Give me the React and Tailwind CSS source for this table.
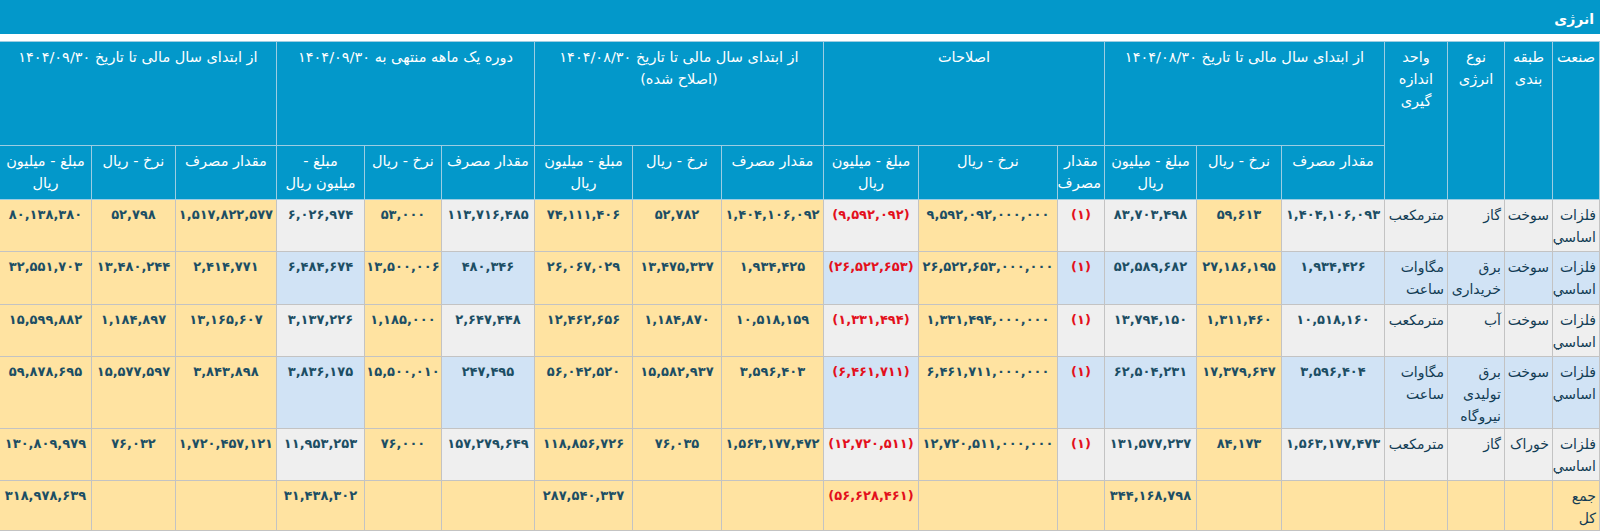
import React from 'react';

const widths = [47, 48, 57, 63, 103, 85, 92, 47, 139, 95, 102, 89, 98, 93, 77, 88, 101, 84, 92];

// value columns (after the 4 label columns) that are always yellow
const yellowCols = [1, 4, 6, 7, 8, 10, 12, 13, 14];
const redCols = [3, 5];

const rows = [
  {
    ind: 'فلزات اساسي', cls: 'سوخت', type: ['گاز'], unit: ['مترمکعب'], tone: 'grey', h: 'h-[52px]',
    v: ['۱,۴۰۴,۱۰۶,۰۹۳', '۵۹,۶۱۳', '۸۳,۷۰۳,۴۹۸', '(۱)', '۹,۵۹۲,۰۹۲,۰۰۰,۰۰۰', '(۹,۵۹۲,۰۹۲)', '۱,۴۰۴,۱۰۶,۰۹۲', '۵۲,۷۸۲', '۷۴,۱۱۱,۴۰۶', '۱۱۳,۷۱۶,۴۸۵', '۵۳,۰۰۰', '۶,۰۲۶,۹۷۴', '۱,۵۱۷,۸۲۲,۵۷۷', '۵۲,۷۹۸', '۸۰,۱۳۸,۳۸۰'],
  },
  {
    ind: 'فلزات اساسي', cls: 'سوخت', type: ['برق', 'خریداری'], unit: ['مگاوات', 'ساعت'], tone: 'blue', h: 'h-[53px]',
    v: ['۱,۹۳۴,۴۲۶', '۲۷,۱۸۶,۱۹۵', '۵۲,۵۸۹,۶۸۲', '(۱)', '۲۶,۵۲۲,۶۵۳,۰۰۰,۰۰۰', '(۲۶,۵۲۲,۶۵۳)', '۱,۹۳۴,۴۲۵', '۱۳,۴۷۵,۳۳۷', '۲۶,۰۶۷,۰۲۹', '۴۸۰,۳۴۶', '۱۳,۵۰۰,۰۰۶', '۶,۴۸۴,۶۷۴', '۲,۴۱۴,۷۷۱', '۱۳,۴۸۰,۲۴۴', '۳۲,۵۵۱,۷۰۳'],
  },
  {
    ind: 'فلزات اساسي', cls: 'سوخت', type: ['آب'], unit: ['مترمکعب'], tone: 'grey', h: 'h-[52px]',
    v: ['۱۰,۵۱۸,۱۶۰', '۱,۳۱۱,۴۶۰', '۱۳,۷۹۴,۱۵۰', '(۱)', '۱,۳۳۱,۴۹۴,۰۰۰,۰۰۰', '(۱,۳۳۱,۴۹۴)', '۱۰,۵۱۸,۱۵۹', '۱,۱۸۴,۸۷۰', '۱۲,۴۶۲,۶۵۶', '۲,۶۴۷,۴۴۸', '۱,۱۸۵,۰۰۰', '۳,۱۳۷,۲۲۶', '۱۳,۱۶۵,۶۰۷', '۱,۱۸۴,۸۹۷', '۱۵,۵۹۹,۸۸۲'],
  },
  {
    ind: 'فلزات اساسي', cls: 'سوخت', type: ['برق', 'تولیدی', 'نیروگاه'], unit: ['مگاوات', 'ساعت'], tone: 'blue', h: 'h-[72px]',
    v: ['۳,۵۹۶,۴۰۴', '۱۷,۳۷۹,۶۴۷', '۶۲,۵۰۴,۲۳۱', '(۱)', '۶,۴۶۱,۷۱۱,۰۰۰,۰۰۰', '(۶,۴۶۱,۷۱۱)', '۳,۵۹۶,۴۰۳', '۱۵,۵۸۲,۹۳۷', '۵۶,۰۴۲,۵۲۰', '۲۴۷,۴۹۵', '۱۵,۵۰۰,۰۱۰', '۳,۸۳۶,۱۷۵', '۳,۸۴۳,۸۹۸', '۱۵,۵۷۷,۵۹۷', '۵۹,۸۷۸,۶۹۵'],
  },
  {
    ind: 'فلزات اساسي', cls: 'خوراک', type: ['گاز'], unit: ['مترمکعب'], tone: 'grey', h: 'h-[52px]',
    v: ['۱,۵۶۳,۱۷۷,۴۷۳', '۸۴,۱۷۳', '۱۳۱,۵۷۷,۲۳۷', '(۱)', '۱۲,۷۲۰,۵۱۱,۰۰۰,۰۰۰', '(۱۲,۷۲۰,۵۱۱)', '۱,۵۶۳,۱۷۷,۴۷۲', '۷۶,۰۳۵', '۱۱۸,۸۵۶,۷۲۶', '۱۵۷,۲۷۹,۶۴۹', '۷۶,۰۰۰', '۱۱,۹۵۳,۲۵۳', '۱,۷۲۰,۴۵۷,۱۲۱', '۷۶,۰۳۲', '۱۳۰,۸۰۹,۹۷۹'],
  },
];

const totals = ['', '', '۳۴۴,۱۶۸,۷۹۸', '', '', '(۵۶,۶۲۸,۴۶۱)', '', '', '۲۸۷,۵۴۰,۳۳۷', '', '', '۳۱,۴۳۸,۳۰۲', '', '', '۳۱۸,۹۷۸,۶۳۹'];

const toneBg = { grey: 'bg-[#efefef]', blue: 'bg-[#d1e3f5]' };

const th = 'bg-[#0398ca] text-white font-normal text-[14.5px] whitespace-nowrap border border-[#9dcde2] align-top text-center px-[3px] pt-[4px] leading-[22px]';
const td = 'border border-[#c3c3c3] align-top pt-[4px] leading-[22px]';
const label = 'text-right pr-[3px] text-[#123c54] text-[14px] whitespace-nowrap';
const num = 'text-center font-bold text-[13px] whitespace-nowrap';

const Lines = ({ items }) => items.map((t, i) => (
  <React.Fragment key={i}>{i > 0 && <br />}{t}</React.Fragment>
));

const SubHeads = ({ narrow, splitAmount }) => (
  <>
    <th className={th}>{narrow ? <>مقدار<br />مصرف</> : 'مقدار مصرف'}</th>
    <th className={th}>نرخ - ریال</th>
    <th className={th}>{splitAmount ? <>مبلغ -<br />میلیون ریال</> : <>مبلغ - میلیون<br />ریال</>}</th>
  </>
);

export default function App() {
  return (
    <div className="bg-white w-[1606px] h-[531px] overflow-hidden font-['DejaVu_Sans',sans-serif] text-[13.5px]">
      <div dir="rtl" className="w-[1600px]">
        <div className="h-[34px] bg-[#0398ca] text-white font-bold text-[14px] flex items-center pr-[6px] pt-[4px]">
          انرژی
        </div>
        <table className="mt-[7px] w-[1600px] table-fixed border-collapse">
          <colgroup>
            {widths.map((w, i) => <col key={i} style={{ width: w }} />)}
          </colgroup>
          <thead>
            <tr className="h-[104px]">
              <th rowSpan={2} className={th}>صنعت</th>
              <th rowSpan={2} className={th}>طبقه<br />بندی</th>
              <th rowSpan={2} className={th}>نوع<br />انرژی</th>
              <th rowSpan={2} className={th}>واحد<br />اندازه<br />گیری</th>
              <th colSpan={3} className={th}>از ابتدای سال مالی تا تاریخ ۱۴۰۴/۰۸/۳۰</th>
              <th colSpan={3} className={th}>اصلاحات</th>
              <th colSpan={3} className={th}>از ابتدای سال مالی تا تاریخ ۱۴۰۴/۰۸/۳۰<br />(اصلاح شده)</th>
              <th colSpan={3} className={th}>دوره یک ماهه منتهی به ۱۴۰۴/۰۹/۳۰</th>
              <th colSpan={3} className={th}>از ابتدای سال مالی تا تاریخ ۱۴۰۴/۰۹/۳۰</th>
            </tr>
            <tr className="h-[54px]">
              <SubHeads />
              <SubHeads narrow />
              <SubHeads />
              <SubHeads splitAmount />
              <SubHeads />
            </tr>
          </thead>
          <tbody>
            {rows.map((r, ri) => {
              const bg = toneBg[r.tone];
              return (
                <tr key={ri} className={r.h}>
                  <td className={`${td} ${bg} ${label}`}><Lines items={r.ind.split(' ')} /></td>
                  <td className={`${td} ${bg} ${label}`}>{r.cls}</td>
                  <td className={`${td} ${bg} ${label}`}><Lines items={r.type} /></td>
                  <td className={`${td} ${bg} ${label}`}><Lines items={r.unit} /></td>
                  {r.v.map((val, i) => (
                    <td
                      key={i}
                      className={`${td} ${num} ${yellowCols.includes(i) ? 'bg-[#ffe3a1]' : bg} ${redCols.includes(i) ? 'text-[#e3101c]' : 'text-[#1c4e64]'}`}
                    >
                      {val}
                    </td>
                  ))}
                </tr>
              );
            })}
            <tr className="h-[50px]">
              <td className={`${td} bg-[#ffe3a1] ${label}`}>جمع<br />کل</td>
              <td className={`${td} bg-[#ffe3a1]`} />
              <td className={`${td} bg-[#ffe3a1]`} />
              <td className={`${td} bg-[#ffe3a1]`} />
              {totals.map((val, i) => (
                <td key={i} className={`${td} ${num} bg-[#ffe3a1] ${i === 5 ? 'text-[#e3101c]' : 'text-[#1c4e64]'}`}>
                  {val}
                </td>
              ))}
            </tr>
          </tbody>
        </table>
      </div>
    </div>
  );
}
